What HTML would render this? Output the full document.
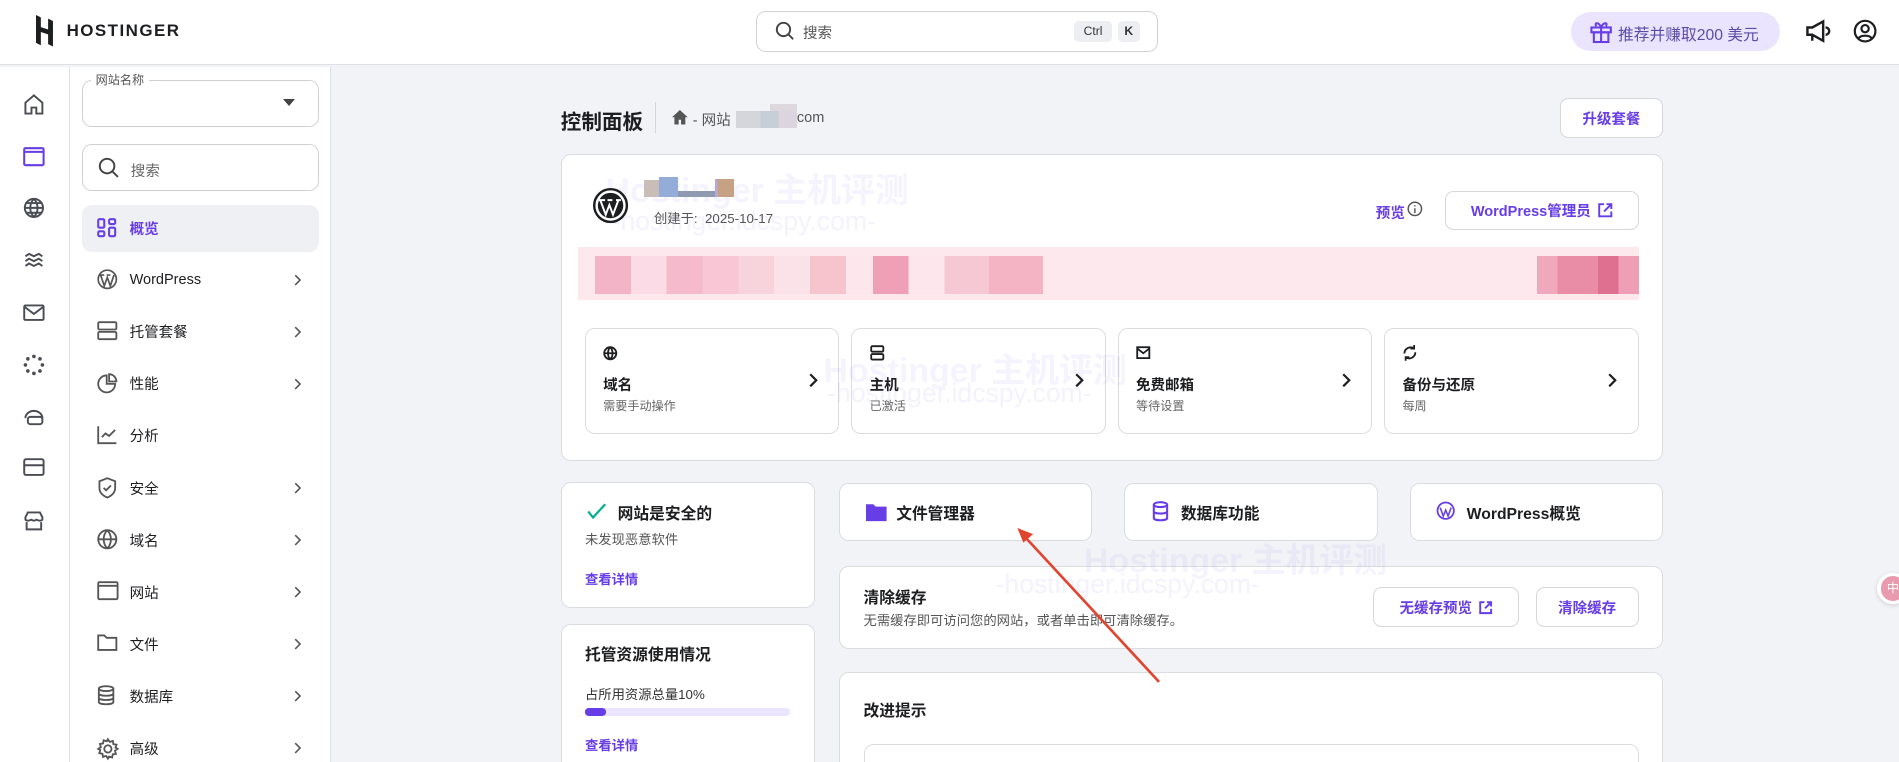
<!DOCTYPE html>
<html><head><meta charset="utf-8">
<style>
*{box-sizing:border-box;margin:0;padding:0}
html,body{width:1899px;height:762px;overflow:hidden;background:#f2f3f6}
#root{zoom:1.2111;width:1568px;height:630px;position:relative;font-family:"Liberation Sans","Noto Sans CJK SC",sans-serif;color:#1d1e20;overflow:hidden;background:#f2f3f6}
.a{position:absolute}
.card{position:absolute;background:#fff;border:1px solid #dadce0;border-radius:8px}
.btn{position:absolute;background:#fff;border:1px solid #d5d7dd;border-radius:7px;color:#673de6;font-weight:bold;font-size:12px;display:flex;align-items:center;justify-content:center;gap:6px}
.pur{color:#673de6}
.nav{position:absolute;left:80px;font-size:12px;color:#1d1e20;display:flex;align-items:center;height:20px}
.nav svg{position:absolute;left:0;top:1px}
.nav span{position:absolute;left:27px;white-space:nowrap}
.chev{position:absolute;left:243px;width:6px;height:10px}
svg{overflow:visible}
.wm{position:absolute;color:rgba(170,160,240,.12);font-weight:bold;font-size:28px;white-space:nowrap}
.wm2{position:absolute;color:rgba(170,160,240,.14);font-size:22px;white-space:nowrap}
</style></head><body><div id="root">
<!-- header -->
<div class="a" style="left:0;top:0;width:1568px;height:54px;background:#fff;border-bottom:1px solid #dfe0e4"></div>
<svg class="a" style="left:30px;top:12px" width="14" height="26" viewBox="0 0 14 26"><path d="M0 0l4 2v8l6 2V3l4 2v21l-4-2v-8l-6-2v11l-4-2z" fill="#1d1e20"/></svg>
<div class="a" style="left:55px;top:17px;font-weight:bold;font-size:14px;letter-spacing:1.2px">HOSTINGER</div>
<div class="a" style="left:624px;top:9px;width:332px;height:34px;border:1px solid #cfd1d6;border-radius:8px;background:#fff"></div>
<svg class="a" style="left:640px;top:17px" width="16" height="16"><circle cx="7" cy="7" r="5.5" fill="none" stroke="#444" stroke-width="1.6"/><path d="M11 11l4 4" stroke="#444" stroke-width="1.6"/></svg>
<div class="a" style="left:663px;top:18px;font-size:12px;color:#555">搜索</div>
<div class="a" style="left:887px;top:17px;width:31px;height:18px;background:#eceef1;border-radius:4px;font-size:10px;text-align:center;line-height:18px;color:#333">Ctrl</div>
<div class="a" style="left:923px;top:17px;width:18px;height:18px;background:#eceef1;border-radius:4px;font-size:10px;text-align:center;line-height:18px;color:#333;font-weight:bold">K</div>
<div class="a" style="left:1297px;top:10px;width:173px;height:32px;background:#ebe4ff;border-radius:16px"></div>
<svg class="a" style="left:1312px;top:16px" width="20" height="20" viewBox="0 0 20 20" fill="none" stroke="#673de6" stroke-width="1.7"><rect x="2" y="7" width="16" height="4"/><rect x="4" y="11" width="12" height="8"/><path d="M10 7v12M10 7C8 2 4 3 6 6M10 7c2-5 6-4 4-1"/></svg>
<div class="a" style="left:1336px;top:18px;font-size:13px;color:#5b4ba6">推荐并赚取200 美元</div>
<svg class="a" style="left:1490px;top:16px" width="22" height="20" viewBox="0 0 22 20" fill="none" stroke="#1d1e20" stroke-width="2"><path d="M2 7h4l9-5v16l-9-5H2zM6 13v5M17 7a3 3 0 010 6"/></svg>
<svg class="a" style="left:1530px;top:16px" width="20" height="20" fill="none" stroke="#1d1e20" stroke-width="1.8"><circle cx="10" cy="10" r="8.5"/><circle cx="10" cy="8" r="3"/><path d="M4.5 16c2-3 9-3 11 0"/></svg>
<!-- rail -->
<div class="a" style="left:0;top:55px;width:58px;height:580px;background:#fff;border-right:1px solid #dfe0e4"></div>
<div class="a" style="left:58px;top:55px;width:215px;height:580px;background:#fff;border-right:1px solid #dfe0e4"></div>
<svg class="a" style="left:19px;top:77px" width="18" height="18" fill="none" stroke="#4b4d55" stroke-width="1.6"><path d="M2 8l7-6 7 6v9h-5v-5H7v5H2z"/></svg>
<svg class="a" style="left:19px;top:121px" width="18" height="16" fill="none" stroke="#673de6" stroke-width="1.7"><rect x="1" y="1" width="16" height="14" rx="1"/><path d="M1 4h16"/></svg>
<svg class="a" style="left:19px;top:163px" width="18" height="18" fill="none" stroke="#4b4d55" stroke-width="1.6"><circle cx="9" cy="9" r="7.5"/><path d="M1.5 9h15M9 1.5c-4 4-4 11 0 15M9 1.5c4 4 4 11 0 15M3 5h12M3 13h12"/></svg>
<svg class="a" style="left:19px;top:206px" width="18" height="18" fill="none" stroke="#4b4d55" stroke-width="1.6"><path d="M2 6l3-2 4 2 4-2 3 2M2 10l3-2 4 2 4-2 3 2M2 14l3-2 4 2 4-2 3 2"/></svg>
<svg class="a" style="left:19px;top:250px" width="18" height="16" fill="none" stroke="#4b4d55" stroke-width="1.6"><rect x="1" y="2" width="16" height="12" rx="1"/><path d="M1 3l8 6 8-6"/></svg>
<svg class="a" style="left:19px;top:292px" width="18" height="18" fill="#4b4d55"><circle cx="9" cy="2" r="1.5"/><circle cx="14" cy="4" r="1.5"/><circle cx="16" cy="9" r="1.5"/><circle cx="14" cy="14" r="1.5"/><circle cx="9" cy="16" r="1.5"/><circle cx="4" cy="14" r="1.5"/><circle cx="2" cy="9" r="1.5"/><circle cx="4" cy="4" r="1.5"/></svg>
<svg class="a" style="left:19px;top:335px" width="18" height="18" fill="none" stroke="#4b4d55" stroke-width="1.6"><path d="M2 10a7 6 0 0114 0"/><rect x="4" y="9" width="12" height="6" rx="2"/></svg>
<svg class="a" style="left:19px;top:378px" width="18" height="16" fill="none" stroke="#4b4d55" stroke-width="1.6"><rect x="1" y="1" width="16" height="13" rx="1.5"/><path d="M1 6h16"/></svg>
<svg class="a" style="left:19px;top:421px" width="18" height="18" fill="none" stroke="#4b4d55" stroke-width="1.6"><path d="M2 6l2-4h10l2 4v2c-2 2-4 0-5 0-1 1-3 1-4 0-1 0-3 2-5 0zM3 10v6h12v-6"/></svg>
<!-- sidebar -->
<div class="a" style="left:68px;top:66px;width:195px;height:39px;border:1px solid #cfd1d6;border-radius:8px"></div>
<div class="a" style="left:75px;top:59px;background:#fff;padding:0 4px;font-size:10px;color:#555">网站名称</div>
<div class="a" style="left:234px;top:82px;width:0;height:0;border-left:5px solid transparent;border-right:5px solid transparent;border-top:6px solid #444"></div>
<div class="a" style="left:68px;top:119px;width:195px;height:39px;border:1px solid #cfd1d6;border-radius:8px"></div>
<svg class="a" style="left:81px;top:130px" width="18" height="18"><circle cx="7.5" cy="7.5" r="6" fill="none" stroke="#444" stroke-width="1.6"/><path d="M12 12l4.5 4.5" stroke="#444" stroke-width="1.6"/></svg>
<div class="a" style="left:108px;top:132px;font-size:12px;color:#666">搜索</div>
<div class="a" style="left:68px;top:169px;width:195px;height:39px;background:#eef0f4;border-radius:8px"></div>
<div class="nav" style="top:179px"><svg width="16" height="16" fill="none" stroke="#673de6" stroke-width="1.7"><rect x="1" y="1" width="5" height="7" rx="1"/><rect x="10" y="1" width="5" height="4" rx="1"/><rect x="1" y="11" width="5" height="4" rx="1"/><rect x="10" y="8" width="5" height="7" rx="1"/></svg><span class="pur" style="font-weight:bold">概览</span></div>
<div class="nav" style="top:221px"><svg width="17" height="17" fill="none" stroke="#555" stroke-width="1.4"><circle cx="8.5" cy="8.5" r="7.5"/><path d="M3 5l3 9 2.5-7 2.5 7 3-9M2 5h4M8 5h3"/></svg><span>WordPress</span></div>
<div class="nav" style="top:264px"><svg width="17" height="16" fill="none" stroke="#555" stroke-width="1.5"><rect x="1" y="1" width="15" height="6" rx="1"/><rect x="1" y="9" width="15" height="6" rx="1"/></svg><span>托管套餐</span></div>
<div class="nav" style="top:307px"><svg width="17" height="17" fill="none" stroke="#555" stroke-width="1.5"><path d="M8 2a7 7 0 107 7H8z"/><path d="M10 1v6h6a6 6 0 00-6-6z"/></svg><span>性能</span></div>
<div class="nav" style="top:350px"><svg width="17" height="16" fill="none" stroke="#555" stroke-width="1.5"><path d="M1 1v14h15M4 10l3-3 3 2 5-5"/></svg><span>分析</span></div>
<div class="nav" style="top:393px"><svg width="17" height="18" fill="none" stroke="#555" stroke-width="1.5"><path d="M8.5 1L2 3.5V9c0 4 3 6.5 6.5 8 3.5-1.5 6.5-4 6.5-8V3.5zM5.5 9l2 2 4-4"/></svg><span>安全</span></div>
<div class="nav" style="top:436px"><svg width="17" height="17" fill="none" stroke="#555" stroke-width="1.5"><circle cx="8.5" cy="8.5" r="7.5"/><path d="M1 8.5h15M8.5 1c-4 4-4 11 0 15M8.5 1c4 4 4 11 0 15"/></svg><span>域名</span></div>
<div class="nav" style="top:479px"><svg width="18" height="16" fill="none" stroke="#555" stroke-width="1.5"><rect x="1" y="1" width="16" height="14" rx="1"/><path d="M1 4h16"/></svg><span>网站</span></div>
<div class="nav" style="top:522px"><svg width="17" height="15" fill="none" stroke="#555" stroke-width="1.5"><path d="M1 2h5l2 2h8v10H1z"/></svg><span>文件</span></div>
<div class="nav" style="top:565px"><svg width="15" height="17" fill="none" stroke="#555" stroke-width="1.5"><ellipse cx="7.5" cy="3" rx="6" ry="2"/><path d="M1.5 3v11c0 2.5 12 2.5 12 0V3M1.5 7c0 2.5 12 2.5 12 0M1.5 10.5c0 2.5 12 2.5 12 0"/></svg><span>数据库</span></div>
<div class="nav" style="top:608px"><svg width="18" height="18" fill="none" stroke="#555" stroke-width="1.5"><circle cx="9" cy="9" r="3"/><path d="M9 1l1.5 2.2 2.6-.8.4 2.6 2.6.5-.8 2.6L17 9l-2.2 1.5.8 2.6-2.6.4-.5 2.6-2.6-.8L9 17l-1.5-2.2-2.6.8-.4-2.6-2.6-.5.8-2.6L1 9l2.2-1.5-.8-2.6 2.6-.4.5-2.6 2.6.8z"/></svg><span>高级</span></div>
<svg class="chev" style="top:226px" viewBox="0 0 6 10" fill="none" stroke="#555" stroke-width="1.3"><path d="M1 1l4 4-4 4"/></svg>
<svg class="chev" style="top:269px" viewBox="0 0 6 10" fill="none" stroke="#555" stroke-width="1.3"><path d="M1 1l4 4-4 4"/></svg>
<svg class="chev" style="top:312px" viewBox="0 0 6 10" fill="none" stroke="#555" stroke-width="1.3"><path d="M1 1l4 4-4 4"/></svg>
<svg class="chev" style="top:398px" viewBox="0 0 6 10" fill="none" stroke="#555" stroke-width="1.3"><path d="M1 1l4 4-4 4"/></svg>
<svg class="chev" style="top:441px" viewBox="0 0 6 10" fill="none" stroke="#555" stroke-width="1.3"><path d="M1 1l4 4-4 4"/></svg>
<svg class="chev" style="top:484px" viewBox="0 0 6 10" fill="none" stroke="#555" stroke-width="1.3"><path d="M1 1l4 4-4 4"/></svg>
<svg class="chev" style="top:527px" viewBox="0 0 6 10" fill="none" stroke="#555" stroke-width="1.3"><path d="M1 1l4 4-4 4"/></svg>
<svg class="chev" style="top:570px" viewBox="0 0 6 10" fill="none" stroke="#555" stroke-width="1.3"><path d="M1 1l4 4-4 4"/></svg>
<svg class="chev" style="top:613px" viewBox="0 0 6 10" fill="none" stroke="#555" stroke-width="1.3"><path d="M1 1l4 4-4 4"/></svg>
<!-- main header -->
<div class="a" style="left:463px;top:87px;font-size:17px;font-weight:bold">控制面板</div>
<div class="a" style="left:541px;top:84px;width:1px;height:26px;background:#d5d7dd"></div>
<svg class="a" style="left:555px;top:91px" width="13" height="12" fill="#555"><path d="M6.5 0L0 6h2v6h3.5V8h2v4H11V6h2z"/></svg>
<div class="a" style="left:572px;top:90px;font-size:12px;color:#555">- 网站</div>
<div class="a" style="left:608px;top:92px;width:50px;height:14px;background:linear-gradient(90deg,#d4d6dc 0 40%,#c6ced8 40% 70%,#dcd4de 70%)"></div>
<div class="a" style="left:636px;top:86px;width:22px;height:6px;background:#dcd8de"></div>
<div class="a" style="left:658px;top:90px;font-size:12px;color:#555;line-height:16px">com</div>
<div class="btn" style="left:1288px;top:81px;width:85px;height:33px">升级套餐</div>
<!-- big card -->
<div class="card" style="left:463px;top:127px;width:910px;height:254px"></div>
<div class="wm" style="left:500px;top:135px">Hostinger 主机评测</div>
<div class="wm2" style="left:505px;top:170px">-hostinger.idcspy.com-</div>
<svg class="a" style="left:490px;top:155px" width="29" height="29" viewBox="0 0 29 29"><circle cx="14.5" cy="14.5" r="13.5" fill="#fff" stroke="#1d1e20" stroke-width="2"/><circle cx="14.5" cy="14.5" r="10.5" fill="#1d1e20"/><path d="M6 10l4.5 12 3-8 3 8L21 10M5 10h5M12 10h4M19 10h4" stroke="#fff" stroke-width="1.6" fill="none"/></svg>
<div class="a" style="left:532px;top:149px;width:12px;height:14px;background:#c9bdb8"></div>
<div class="a" style="left:544px;top:146px;width:16px;height:17px;background:#93acd8"></div>
<div class="a" style="left:560px;top:158px;width:30px;height:5px;background:#8e9ab0"></div>
<div class="a" style="left:590px;top:148px;width:14px;height:15px;background:#b9a9c8"></div>
<div class="a" style="left:593px;top:148px;width:13px;height:15px;background:#c7a184"></div>
<div class="a" style="left:540px;top:172px;font-size:11px;color:#555">创建于:&nbsp; 2025-10-17</div>
<div class="a pur" style="left:1136px;top:167px;font-size:12px;font-weight:bold">预览</div>
<svg class="a" style="left:1162px;top:166px" width="13" height="13" fill="none" stroke="#555" stroke-width="1.2"><circle cx="6.5" cy="6.5" r="5.5"/><path d="M6.5 6v4M6.5 3.5v1"/></svg>
<div class="btn" style="left:1193px;top:158px;width:160px;height:32px">WordPress管理员 <svg width="12" height="12" fill="none" stroke="#673de6" stroke-width="1.6"><path d="M5 1H1v10h10V7M7 1h4v4M11 1L5 7"/></svg></div>
<div class="a" style="left:477px;top:204px;width:876px;height:44px;background:#fde8ee"></div>
<div class="a" style="left:491px;top:211px;width:370px;height:32px;background:linear-gradient(90deg,#f2b4c6 0 8%,#fbdce6 8% 16%,#f5bacb 16% 24%,#f8c6d4 24% 32%,#f7d3dc 32% 40%,#fbe1e8 40% 48%,#f6c4cd 48% 56%,#fde6ec 56% 62%,#ef9fb6 62% 70%,#fde6ec 70% 78%,#f6c8d4 78% 88%,#f4b4c4 88% 100%)"></div>
<div class="a" style="left:1269px;top:211px;width:84px;height:32px;background:linear-gradient(90deg,#f0a8bc 0 20%,#e98ca6 20% 60%,#e0708f 60% 80%,#ee9fb5 80%)"></div>
<div class="card" style="left:483px;top:271px;width:210px;height:87px"></div>
<div class="card" style="left:703px;top:271px;width:210px;height:87px"></div>
<div class="card" style="left:923px;top:271px;width:210px;height:87px"></div>
<div class="card" style="left:1143px;top:271px;width:210px;height:87px"></div>
<div class="wm" style="left:680px;top:283px">Hostinger 主机评测</div>
<div class="wm2" style="left:683px;top:312px">-hostinger.idcspy.com-</div>
<svg class="a" style="left:498px;top:286px" width="12" height="12" fill="none" stroke="#1d1e20" stroke-width="1.5"><circle cx="6" cy="6" r="5"/><path d="M1 6h10M6 1c-2.5 2.5-2.5 7.5 0 10M6 1c2.5 2.5 2.5 7.5 0 10"/></svg>
<svg class="a" style="left:718px;top:285px" width="12" height="13" fill="none" stroke="#1d1e20" stroke-width="1.5"><rect x="1" y="1" width="10" height="4.5" rx="1"/><rect x="1" y="7.5" width="10" height="4.5" rx="1"/></svg>
<svg class="a" style="left:938px;top:286px" width="12" height="11" fill="none" stroke="#1d1e20" stroke-width="1.5"><rect x="1" y="1" width="10" height="9"/><path d="M1 2l5 4 5-4"/></svg>
<svg class="a" style="left:1158px;top:285px" width="13" height="13" fill="none" stroke="#1d1e20" stroke-width="1.5"><path d="M2 7a5 5 0 018-4M11 6a5 5 0 01-8 4M10 0v3H7M3 13v-3h3"/></svg>
<div class="a" style="left:498px;top:309px;font-size:12px;font-weight:bold">域名</div><div class="a" style="left:498px;top:328px;font-size:10px;color:#666">需要手动操作</div>
<div class="a" style="left:718px;top:309px;font-size:12px;font-weight:bold">主机</div><div class="a" style="left:718px;top:328px;font-size:10px;color:#666">已激活</div>
<div class="a" style="left:938px;top:309px;font-size:12px;font-weight:bold">免费邮箱</div><div class="a" style="left:938px;top:328px;font-size:10px;color:#666">等待设置</div>
<div class="a" style="left:1158px;top:309px;font-size:12px;font-weight:bold">备份与还原</div><div class="a" style="left:1158px;top:328px;font-size:10px;color:#666">每周</div>
<svg class="a" style="left:668px;top:308px" width="8" height="12" fill="none" stroke="#1d1e20" stroke-width="1.8"><path d="M1 1l5 5-5 5"/></svg>
<svg class="a" style="left:888px;top:308px" width="8" height="12" fill="none" stroke="#1d1e20" stroke-width="1.8"><path d="M1 1l5 5-5 5"/></svg>
<svg class="a" style="left:1108px;top:308px" width="8" height="12" fill="none" stroke="#1d1e20" stroke-width="1.8"><path d="M1 1l5 5-5 5"/></svg>
<svg class="a" style="left:1328px;top:308px" width="8" height="12" fill="none" stroke="#1d1e20" stroke-width="1.8"><path d="M1 1l5 5-5 5"/></svg>
<!-- lower -->
<div class="card" style="left:463px;top:398px;width:210px;height:104px"></div>
<svg class="a" style="left:485px;top:415px" width="16" height="13" fill="none" stroke="#00b090" stroke-width="1.8"><path d="M1 7l4 5L15 1"/></svg>
<div class="a" style="left:510px;top:414px;font-size:13px;font-weight:bold">网站是安全的</div>
<div class="a" style="left:483px;top:437px;font-size:11px;color:#555">未发现恶意软件</div>
<div class="a pur" style="left:483px;top:470px;font-size:11px;font-weight:bold">查看详情</div>
<div class="card" style="left:463px;top:515px;width:210px;height:130px"></div>
<div class="a" style="left:483px;top:530px;font-size:13px;font-weight:bold">托管资源使用情况</div>
<div class="a" style="left:483px;top:565px;font-size:11px;color:#333">占所用资源总量10%</div>
<div class="a" style="left:483px;top:585px;width:169px;height:6px;background:#ebe4ff;border-radius:3px"></div>
<div class="a" style="left:483px;top:585px;width:17px;height:6px;background:#673de6;border-radius:3px"></div>
<div class="a pur" style="left:483px;top:607px;font-size:11px;font-weight:bold">查看详情</div>
<div class="card" style="left:693px;top:399px;width:209px;height:48px"></div>
<div class="card" style="left:928px;top:399px;width:210px;height:48px"></div>
<div class="card" style="left:1164px;top:399px;width:209px;height:48px"></div>
<svg class="a" style="left:715px;top:415px" width="17" height="15" fill="#673de6"><path d="M0 1h6l2 2h9v12H0z"/></svg>
<div class="a" style="left:740px;top:414px;font-size:13px;font-weight:bold">文件管理器</div>
<svg class="a" style="left:951px;top:414px" width="14" height="17" fill="none" stroke="#673de6" stroke-width="1.7"><ellipse cx="7" cy="3" rx="5.5" ry="2"/><path d="M1.5 3v11c0 2.5 11 2.5 11 0V3M1.5 8.5c0 2.5 11 2.5 11 0"/></svg>
<div class="a" style="left:975px;top:414px;font-size:13px;font-weight:bold">数据库功能</div>
<svg class="a" style="left:1186px;top:414px" width="16" height="16"><circle cx="8" cy="8" r="7.5" fill="#673de6"/><circle cx="8" cy="8" r="6" fill="#fff"/><path d="M3.5 5.5l2.5 7 2-5 2 5 2.5-7" stroke="#673de6" stroke-width="1.3" fill="none"/></svg>
<div class="a" style="left:1211px;top:414px;font-size:13px;font-weight:bold">WordPress概览</div>
<div class="card" style="left:693px;top:467px;width:680px;height:69px"></div>
<div class="wm" style="left:895px;top:440px">Hostinger 主机评测</div>
<div class="wm2" style="left:822px;top:470px">-hostinger.idcspy.com-</div>
<div class="a" style="left:713px;top:483px;font-size:13px;font-weight:bold">清除缓存</div>
<div class="a" style="left:713px;top:504px;font-size:11px;color:#555">无需缓存即可访问您的网站，或者单击即可清除缓存。</div>
<div class="btn" style="left:1134px;top:485px;width:120px;height:33px">无缓存预览 <svg width="11" height="11" fill="none" stroke="#673de6" stroke-width="1.6"><path d="M4.5 1H1v9h9V6.5M6.5 1H10v3.5M10 1L5 6"/></svg></div>
<div class="btn" style="left:1268px;top:485px;width:85px;height:33px">清除缓存</div>
<div class="card" style="left:693px;top:555px;width:680px;height:100px"></div>
<div class="a" style="left:713px;top:576px;font-size:13px;font-weight:bold">改进提示</div>
<div class="a" style="left:713px;top:614px;width:640px;height:40px;border:1px solid #dadce0;border-radius:8px"></div>
<!-- arrow -->
<svg class="a" style="left:0;top:0" width="1568" height="630"><path d="M957 563L846 443" stroke="#e0452f" stroke-width="2.2"/><path d="M840 436l13 5-8 7z" fill="#e0452f"/></svg>
<div class="a" style="left:1550px;top:473px;width:26px;height:26px;border-radius:13px;background:#fff;box-shadow:0 1px 4px rgba(0,0,0,.15)"></div>
<div class="a" style="left:1553px;top:476px;width:20px;height:20px;border-radius:10px;background:#e89aae;color:#fff;font-size:10px;text-align:center;line-height:20px">中</div>
</div></body></html>
